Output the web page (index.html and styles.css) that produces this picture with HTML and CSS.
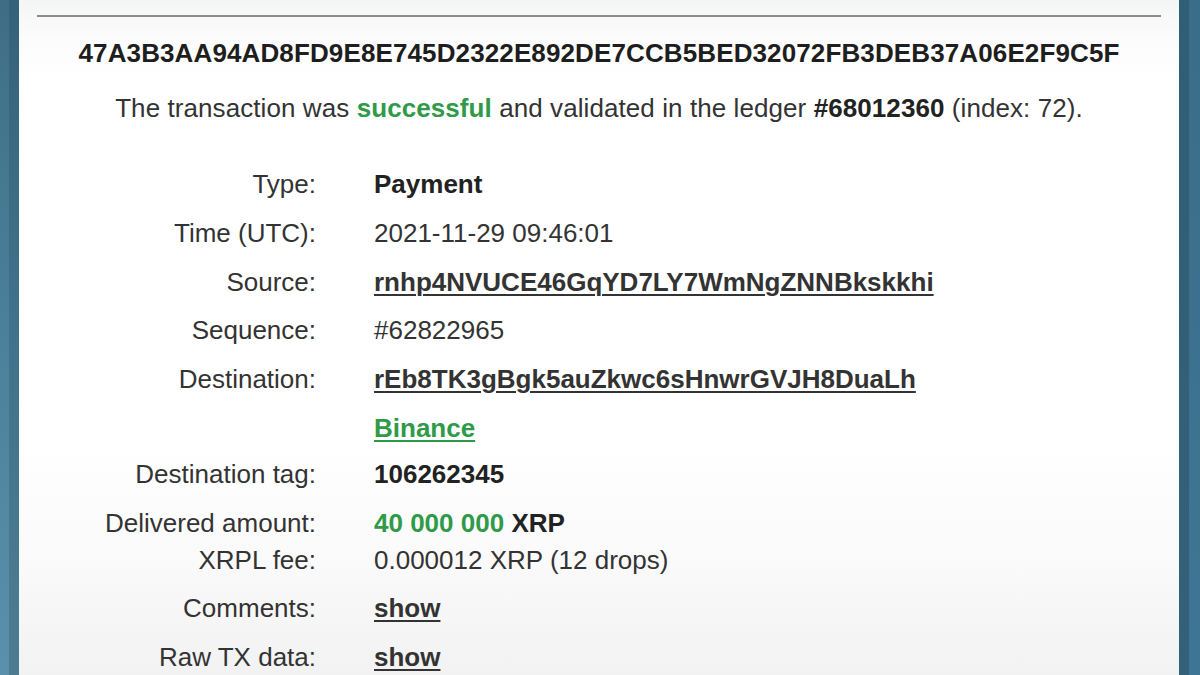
FILE: index.html
```html
<!DOCTYPE html>
<html>
<head>
<meta charset="utf-8">
<link rel="stylesheet" href="styles.css">
</head>
<body>
<div class="frame">
  <div class="strip-left-outer"></div>
  <div class="strip-left-inner"></div>
  <main class="card">
    <div class="rule"></div>
    <h1 class="hash">47A3B3AA94AD8FD9E8E745D2322E892DE7CCB5BED32072FB3DEB37A06E2F9C5F</h1>
    <p class="summary">The transaction was <b class="green">successful</b> and validated in the ledger <b>#68012360</b> (index: 72).</p>
    <div class="details">
      <div class="row"><div class="label">Type:</div><div class="value"><b>Payment</b></div></div>
      <div class="row"><div class="label">Time (UTC):</div><div class="value">2021-11-29 09:46:01</div></div>
      <div class="row"><div class="label">Source:</div><div class="value"><a class="link" href="#">rnhp4NVUCE46GqYD7LY7WmNgZNNBkskkhi</a></div></div>
      <div class="row"><div class="label">Sequence:</div><div class="value">#62822965</div></div>
      <div class="row"><div class="label">Destination:</div><div class="value"><a class="link" href="#">rEb8TK3gBgk5auZkwc6sHnwrGVJH8DuaLh</a></div></div>
      <div class="row row-short"><div class="label"></div><div class="value"><a class="link green" href="#">Binance</a></div></div>
      <div class="row"><div class="label">Destination tag:</div><div class="value"><b>106262345</b></div></div>
      <div class="row row-tight"><div class="label">Delivered amount:</div><div class="value"><b class="green">40 000 000</b> <b>XRP</b></div></div>
      <div class="row"><div class="label">XRPL fee:</div><div class="value">0.000012 XRP (12 drops)</div></div>
      <div class="row"><div class="label">Comments:</div><div class="value"><a class="link" href="#">show</a></div></div>
      <div class="row"><div class="label">Raw TX data:</div><div class="value"><a class="link" href="#">show</a></div></div>
    </div>
  </main>
  <div class="strip-right-inner"></div>
  <div class="strip-right-outer"></div>
</div>
</body>
</html>
```

FILE: styles.css
```css
html, body {
  margin: 0;
  padding: 0;
  height: 100%;
  overflow: hidden;
}

body {
  font-family: "Liberation Sans", Arial, sans-serif;
  color: #333;
}

.frame {
  display: flex;
  height: 675px;
}

.strip-left-outer {
  width: 9px;
  flex: none;
  background: linear-gradient(to bottom, #3e6e86 0%, #4a7f99 45%, #5a90ab 100%);
}

.strip-left-inner {
  width: 10px;
  flex: none;
  background: linear-gradient(to bottom, #34627a 0%, #41718a 45%, #4d7c92 100%);
}

.strip-right-inner {
  width: 10px;
  flex: none;
  background: linear-gradient(to bottom, #305e76 0%, #33617a 100%);
}

.strip-right-outer {
  width: 11px;
  flex: none;
  background: linear-gradient(to bottom, #3a6d89 0%, #3f7594 100%);
}

.card {
  flex: 1;
  padding-top: 15px;
  background: linear-gradient(to bottom, #f4f5f5 0px, #fcfcfc 40px, #ffffff 80px, #ffffff 440px, #fafafa 560px, #f2f2f2 675px);
}

.rule {
  height: 2px;
  margin: 0 18px;
  background: #8c8c8c;
}

.hash {
  margin: 21px 0 0;
  font-size: 26px;
  line-height: 30px;
  font-weight: bold;
  letter-spacing: 0.12px;
  text-align: center;
  color: #1e1e1e;
}

.summary {
  margin: 25px 0 0;
  font-size: 26px;
  line-height: 30px;
  letter-spacing: 0.08px;
  text-align: center;
  color: #333;
}

.summary b {
  color: #222;
}

.green, .summary b.green {
  color: #2f9a48;
}

.details {
  margin-top: 37px;
  font-size: 26px;
}

.row {
  display: flex;
  height: 48.75px;
  line-height: 48.75px;
}

.row-short {
  height: 46px;
}

.row-tight {
  height: 37px;
}

.label {
  width: 297px;
  flex: none;
  text-align: right;
  color: #333;
}

.value {
  margin-left: 58px;
  color: #333;
  white-space: nowrap;
}

.value b {
  color: #222;
}

.value b.green {
  color: #2f9a48;
}

.link {
  font-weight: bold;
  color: #333;
  text-decoration: underline;
  text-underline-offset: 3px;
  text-decoration-thickness: 2px;
}

.link.green {
  color: #2f9a48;
}
```
